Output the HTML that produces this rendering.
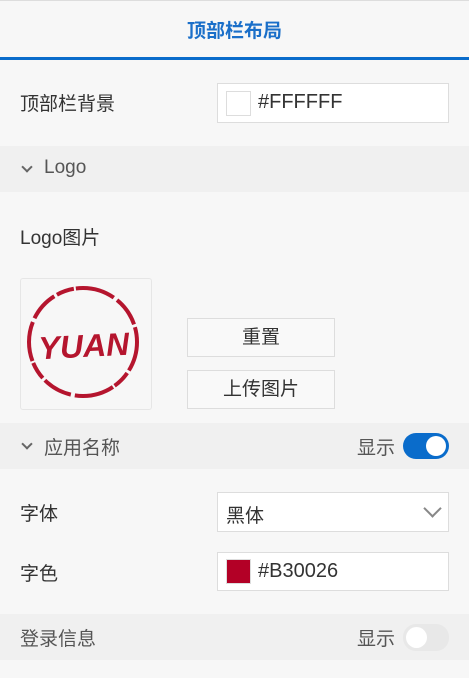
<!DOCTYPE html>
<html><head><meta charset="utf-8"><style>
*{box-sizing:border-box;margin:0;padding:0}
body{width:469px;height:678px;background:#f7f7f7;font-family:"Liberation Sans","Noto Sans CJK SC",sans-serif;color:#333;position:relative;overflow:hidden;font-size:19px}
.a{position:absolute}
.sec{position:absolute;left:0;width:469px;height:46px;background:#f0f0f0}
.inp{position:absolute;left:217px;width:232px;background:#fff;border:1px solid #ddd}
.btn{position:absolute;left:187px;width:148px;height:39px;border:1px solid #ddd;background:#f9f9f9;text-align:center;line-height:37px;font-size:19px;color:#333}
.lbl{position:absolute;left:20px;font-size:19px;color:#333}
.chev{position:absolute;left:23px;width:8px;height:8px;border-right:2px solid #666;border-bottom:2px solid #666;transform:rotate(45deg)}
</style></head><body>
<div class="a" style="left:0;top:0;width:469px;height:1px;background:#ddd"></div>
<div class="a" style="left:0;top:16px;width:469px;text-align:center;font-size:19px;font-weight:bold;color:#1a6fc9">顶部栏布局</div>
<div class="a" style="left:0;top:57px;width:469px;height:3px;background:#0a6ccb"></div>

<div class="lbl" style="top:89px">顶部栏背景</div>
<div class="inp" style="top:83px;height:40px"><div class="a" style="left:8px;top:7px;width:25px;height:25px;border:1px solid #ddd;background:#fff"></div><div class="a" style="left:40px;top:7px;font-size:20px;color:#333">#FFFFFF</div></div>

<div class="sec" style="top:146px"><div class="chev" style="top:17px"></div><div class="a" style="left:44px;top:11px;font-size:19px;color:#555">Logo</div></div>

<div class="lbl" style="top:223px">Logo图片</div>
<div class="a" style="left:20px;top:278px;width:132px;height:132px;border:1px solid #e6e6e6;border-radius:3px;background:#f7f7f7">
<svg width="130" height="130" viewBox="0 0 130 130"><circle cx="62" cy="63" r="54" fill="none" stroke="#b5152e" stroke-width="4" stroke-dasharray="30 3 18 2 40 4"/><text x="63" y="78" text-anchor="middle" font-family="Liberation Sans" font-weight="bold" font-style="italic" font-size="32" fill="#b5152e" transform="rotate(-3 63 70)">YUAN</text></svg></div>
<div class="btn" style="top:318px">重置</div>
<div class="btn" style="top:370px">上传图片</div>

<div class="sec" style="top:423px"><div class="chev" style="top:17px"></div><div class="a" style="left:44px;top:10px;font-size:19px;color:#555">应用名称</div><div class="a" style="left:357px;top:10px;font-size:19px;color:#555">显示</div><div class="a" style="left:403px;top:10px;width:46px;height:26px;border-radius:13px;background:#0a6ccb"><div class="a" style="left:23px;top:3px;width:20px;height:20px;border-radius:50%;background:#fff"></div></div></div>

<div class="lbl" style="top:499px">字体</div>
<div class="inp" style="top:492px;height:40px"><div class="a" style="left:8px;top:8px;font-size:19px">黑体</div><div class="a" style="left:208px;top:9px;width:13px;height:13px;border-right:2px solid #888;border-bottom:2px solid #888;transform:rotate(45deg)"></div></div>

<div class="lbl" style="top:559px">字色</div>
<div class="inp" style="top:552px;height:39px"><div class="a" style="left:8px;top:6px;width:25px;height:25px;border:1px solid #ddd;background:#b30026"></div><div class="a" style="left:40px;top:7px;font-size:20px">#B30026</div></div>

<div class="sec" style="top:614px"><div class="a" style="left:20px;top:10px;font-size:19px;color:#555">登录信息</div><div class="a" style="left:357px;top:10px;font-size:19px;color:#555">显示</div><div class="a" style="left:403px;top:10px;width:46px;height:27px;border-radius:13px;background:#e8e8e8"><div class="a" style="left:3px;top:3px;width:21px;height:21px;border-radius:50%;background:#fff"></div></div></div>
</body></html>
